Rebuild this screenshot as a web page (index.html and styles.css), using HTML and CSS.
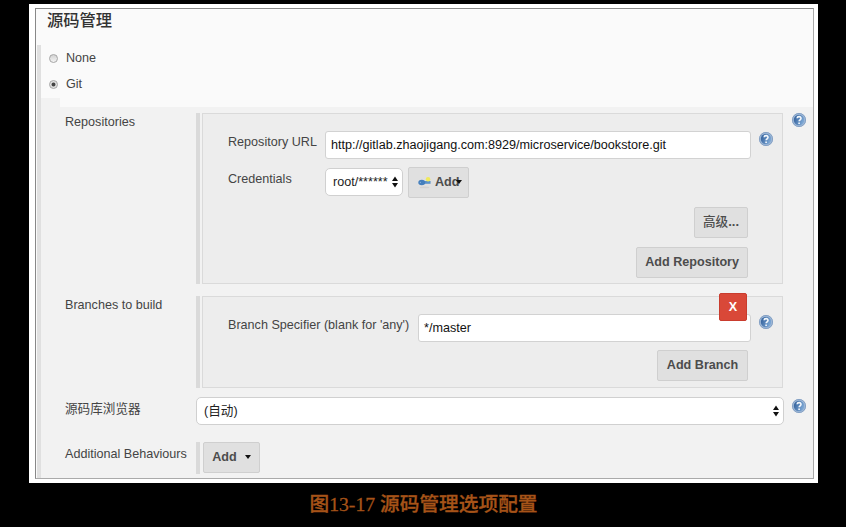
FILE: index.html
```html
<!DOCTYPE html>
<html lang="zh-CN">
<head>
<meta charset="utf-8">
<title>源码管理</title>
<link rel="stylesheet" href="styles.css">
</head>
<body>
<svg width="0" height="0" class="defs" aria-hidden="true">
  <defs>
    <linearGradient id="ball" x1="0" y1="0" x2="1" y2="0.4">
      <stop offset="0" stop-color="#2c5a96"/><stop offset="1" stop-color="#7ba6d4"/>
    </linearGradient>
    <symbol id="help" viewBox="0 0 16 16">
      <circle cx="8" cy="8" r="7" fill="#9fb8d6"/>
      <circle cx="8" cy="8" r="6.6" fill="none" stroke="#7d9ac0" stroke-width=".8"/>
      <circle cx="8" cy="8" r="5.2" fill="url(#ball)"/>
      <path d="M6.1 6.2C6.3 4 10.2 4.1 10 6.4C9.9 7.8 8.2 7.8 8.1 9.3M8.1 10.5V12" fill="none" stroke="#f4f8fc" stroke-width="1.6"/>
    </symbol>
    <symbol id="updown" viewBox="0 0 6 12">
      <path d="M3 0.4L6 5H0ZM3 11.6L6 7H0Z" fill="#111"/>
    </symbol>
  </defs>
</svg>
<figure class="figure">
  <div class="frame">
    <div class="panel">
      <h1 class="title">源码管理</h1>
      <div class="section">
        <div class="radios">
          <div class="option"><span class="radio"></span>None</div>
          <div class="option"><span class="radio checked"></span>Git</div>
        </div>
        <div class="form">
          <div class="step"></div>
          <div class="row repositories">
            <div class="label">Repositories</div>
            <div class="repeat">
              <div class="box">
                <div class="field url-field">
                  <span class="name">Repository URL</span>
                  <div class="input">http://gitlab.zhaojigang.com:8929/microservice/bookstore.git</div>
                  <svg class="help"><use href="#help"/></svg>
                </div>
                <div class="field cred-field">
                  <span class="name">Credentials</span>
                  <div class="select small"><span>root/******</span><svg class="updown"><use href="#updown"/></svg></div>
                  <div class="button add-cred">
                    <svg class="key" viewBox="0 0 12 12">
                      <ellipse cx="6" cy="10.6" rx="4.5" ry=".8" fill="#d2d2d2"/>
                      <path d="M4 4.6H11.6V7.2H4Z" fill="#5b93cb"/>
                      <ellipse cx="3.5" cy="6" rx="3.2" ry="2.5" fill="#447fbd"/>
                      <circle cx="2.2" cy="5.8" r=".6" fill="#8db4dc"/>
                      <circle cx="9.3" cy="3" r="2.1" fill="#f0e95c"/>
                    </svg>
                    <span>Add</span><i class="caret over"></i>
                  </div>
                </div>
                <div class="actions advanced"><div class="button">高级<b>...</b></div></div>
                <div class="actions"><div class="button">Add Repository</div></div>
              </div>
            </div>
            <svg class="help outer"><use href="#help"/></svg>
          </div>
          <div class="row branches">
            <div class="label">Branches to build</div>
            <div class="repeat">
              <div class="box">
                <div class="delete">X</div>
                <div class="field branch-field">
                  <span class="name">Branch Specifier (blank for 'any')</span>
                  <div class="input">*/master</div>
                  <svg class="help"><use href="#help"/></svg>
                </div>
                <div class="actions"><div class="button">Add Branch</div></div>
              </div>
            </div>
          </div>
          <div class="row browser">
            <div class="label">源码库浏览器</div>
            <div class="select"><span>(自动)</span><svg class="updown"><use href="#updown"/></svg></div>
            <svg class="help outer"><use href="#help"/></svg>
          </div>
          <div class="row behaviours">
            <div class="label">Additional Behaviours</div>
            <div class="repeat"><div class="button menu"><span>Add</span><i class="caret"></i></div></div>
          </div>
        </div>
      </div>
    </div>
  </div>
  <figcaption class="caption">图13-17 源码管理选项配置</figcaption>
</figure>
</body>
</html>
```
FILE: styles.css
```css
* { box-sizing: border-box; }
body {
  margin: 0;
  background: #000;
  color: #444;
  font: 12.6px/16px "Liberation Sans", "Noto Sans CJK SC", sans-serif;
  overflow: hidden;
}
.defs { position: absolute; }
.figure { margin: 0; padding-top: 4px; white-space: nowrap; }
.frame {
  width: 789px;
  height: 479px;
  margin-left: 29px;
  padding: 4px 4px 4px 6px;
  background: #fff;
}
.panel {
  height: 471px;
  border: 1px solid #888;
  border-right-color: #aaa;
  border-bottom-color: #aaa;
  background: #fafafa;
  padding-left: 1px;
}
.title {
  height: 36px;
  margin: 0;
  padding: 0 0 0 10px;
  font-size: 16.3px;
  line-height: 22px;
  font-weight: 500;
  color: #333;
}
.section { height: 433px; border-left: 4px solid #e0e0e0; }
.radios { height: 53px; padding: 5px 0 0 8px; }
.option { display: flex; align-items: center; height: 16px; margin-bottom: 10px; gap: 8px; }
.radio {
  width: 9px;
  height: 9px;
  border: 1px solid #a5a5a5;
  border-radius: 50%;
  background: linear-gradient(#d2d2d2, #f4f4f4);
}
.radio.checked { background: radial-gradient(circle, #444 0 1.5px, #e2e2e2 2.4px); }
.form { height: 380px; background: #f2f2f2; }
.step { height: 9px; margin-left: 19px; background: #fafafa; }
.row { display: flex; align-items: flex-start; padding-left: 24px; }
.label { width: 131px; flex: none; }
.repeat { border-left: 4px solid #dadada; padding-left: 2px; display: flex; }
.box {
  position: relative;
  width: 581px;
  border: 1px solid #dadada;
  background: #ededed;
  padding-left: 25px;
}
.field { display: flex; align-items: flex-start; }
.name { flex: none; }
.input {
  height: 28px;
  border: 1px solid #d2d2d2;
  border-radius: 3px;
  background: #fff;
  color: #111;
  line-height: 26px;
  padding-left: 5px;
}
.select {
  display: flex;
  align-items: center;
  justify-content: space-between;
  height: 28px;
  width: 588px;
  border: 1px solid #d0d0d0;
  border-radius: 5px;
  background: #fff;
  color: #222;
  padding: 0 4px 0 7px;
}
.updown { width: 6px; height: 12px; flex: none; }
.help { width: 16px; height: 16px; flex: none; }
.outer { margin-left: 8px; }
.button {
  display: flex;
  align-items: center;
  justify-content: center;
  height: 31px;
  border: 1px solid #cfcfcf;
  border-radius: 2px;
  background: #e0e0e0;
  color: #4c4c4c;
  font-weight: 700;
  padding: 0 8px 1px;
}
.actions { display: flex; justify-content: flex-end; margin: 9px 34px 0 0; }
.caret { border: 3px solid transparent; border-top: 4px solid #111; border-bottom: 0; }

.repositories { padding-top: 6px; }
.repositories .label { padding-top: 1px; }
.repositories .outer { margin-top: -1px; }
.repositories .box { height: 171px; padding-top: 17px; }
.url-field .name { width: 97px; padding-top: 3px; }
.url-field .input { width: 426px; font-size: 12.62px; }
.field .help { margin-left: 7px; }
.cred-field { height: 31px; margin-top: 8px; }
.cred-field .name { width: 97px; padding-top: 4px; }
.select.small { width: 78px; margin-top: 1px; padding-right: 4px; }
.add-cred { width: 61px; margin-left: 5px; padding: 0 8px 1px; justify-content: flex-start; }
.key { width: 13px; height: 13px; margin: 0 4px 0 1px; flex: none; }
.over { margin-left: -3px; }
.advanced .button { font-weight: 500; }
.advanced b { font-size: 13px; }

.branches { margin-top: 12px; }
.branches .label { padding-top: 1px; }
.branches .box { height: 92px; padding-top: 17px; }
.branch-field .name { width: 190px; padding-top: 3px; }
.branch-field .input { width: 333px; }
.branches .actions { margin-top: 8px; }
.branches .button { width: 91px; }
.delete {
  position: absolute;
  top: -4px;
  right: 35px;
  width: 28px;
  height: 28px;
  border: 1px solid #c93c2e;
  border-radius: 2px;
  background: #d94838;
  color: #fff;
  font-weight: 700;
  line-height: 26px;
  text-align: center;
}

.browser { margin-top: 9px; }
.browser .label { padding-top: 4px; }
.browser .outer { margin-top: 1px; }
.browser .select { flex: none; }
.browser .outer { margin-left: 7px; }
.behaviours { margin-top: 17px; }
.behaviours .label { padding-top: 4px; }
.behaviours .repeat { height: 32px; padding-left: 3px; }
.menu { width: 57px; gap: 8px; }

.caption {
  width: 846px;
  margin-top: 9px;
  padding-left: 1px;
  text-align: center;
  font: 500 19.7px/24px "Liberation Serif", "Noto Sans CJK SC", serif;
  -webkit-text-stroke: .3px #a65318;
  color: #a65318;
}
```
